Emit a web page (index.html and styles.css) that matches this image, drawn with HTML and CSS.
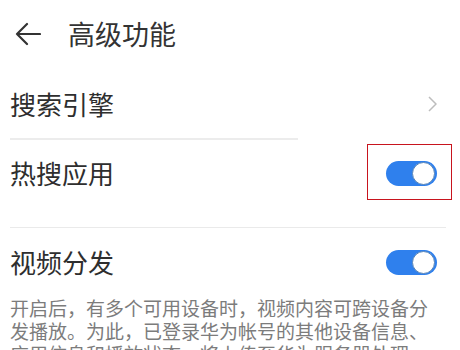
FILE: index.html
```html
<!DOCTYPE html>
<html lang="zh-CN">
<head>
<meta charset="utf-8">
<link rel="stylesheet" href="styles.css">
</head>
<body>
<div class="page">
  <header class="header">
    <svg class="back" width="26" height="24" viewBox="0 0 26 24">
      <path d="M25 12H2M12 2L2 12l10 10" fill="none" stroke="#333" stroke-width="2.2" stroke-linecap="round" stroke-linejoin="round"/>
    </svg>
    <h1 class="title">高级功能</h1>
  </header>
  <div class="row row-1">
    <span class="label">搜索引擎</span>
    <svg class="chev" width="9" height="16" viewBox="0 0 9 16">
      <path d="M1 1l7 7-7 7" fill="none" stroke="#bdbdbd" stroke-width="1.5"/>
    </svg>
  </div>
  <div class="divider"></div>
  <div class="row row-2">
    <span class="label">热搜应用</span>
    <span class="toggle"><span class="thumb"></span></span>
  </div>
  <div class="divider divider-2"></div>
  <div class="row row-3">
    <span class="label">视频分发</span>
    <span class="toggle"><span class="thumb"></span></span>
  </div>
  <p class="desc">开启后，有多个可用设备时，视频内容可跨设备分发播放。为此，已登录华为帐号的其他设备信息、应用信息和播放状态，将上传至华为服务器处理。</p>
  <div class="mark"></div>
</div>
</body>
</html>
```

FILE: styles.css
```css
* { box-sizing: border-box; }
html, body {
  margin: 0;
  padding: 0;
  background: #fff;
}
body {
  font-family: "Noto Sans CJK SC", "Noto Sans", sans-serif;
  color: #2b2b2b;
  width: 460px;
  height: 350px;
  overflow: hidden;
}
.page {
  position: relative;
  padding-left: 10px;
}
.header {
  height: 70px;
  display: flex;
  align-items: center;
}
.back {
  margin-left: 5px;
  margin-right: 27px;
  margin-top: -3px;
}
.title {
  margin: 0 0 3px;
  font-size: 27px;
  font-weight: 400;
  line-height: 1;
  color: #333;
}
.row {
  display: flex;
  align-items: center;
  justify-content: space-between;
  padding-right: 23px;
}
.row-1 { height: 68px; }
.row-2 { height: 66px; margin-bottom: 21px; }
.row-3 { height: 68px; }
.label {
  font-size: 26px;
  line-height: 1;
  color: #2e2e2e;
}
.divider {
  height: 2px;
  width: 288px;
  background: #ececec;
}
.divider-2 {
  width: 436px;
  height: 1px;
  background: #eaeaea;
}
.toggle {
  width: 51px;
  height: 25px;
  border-radius: 13px;
  background: #2f80ed;
  display: flex;
  align-items: center;
  justify-content: flex-end;
  padding-right: 2px;
}
.thumb {
  width: 23px;
  height: 23px;
  border-radius: 50%;
  background: #fff;
  border: 1.5px solid #5a86b8;
}
.desc {
  margin: 0;
  width: 420px;
  font-size: 19px;
  line-height: 23px;
  color: #7c7c7c;
}
.mark {
  position: absolute;
  left: 367px;
  top: 144px;
  width: 85px;
  height: 56px;
  border: 1px solid #c8141e;
}
```
